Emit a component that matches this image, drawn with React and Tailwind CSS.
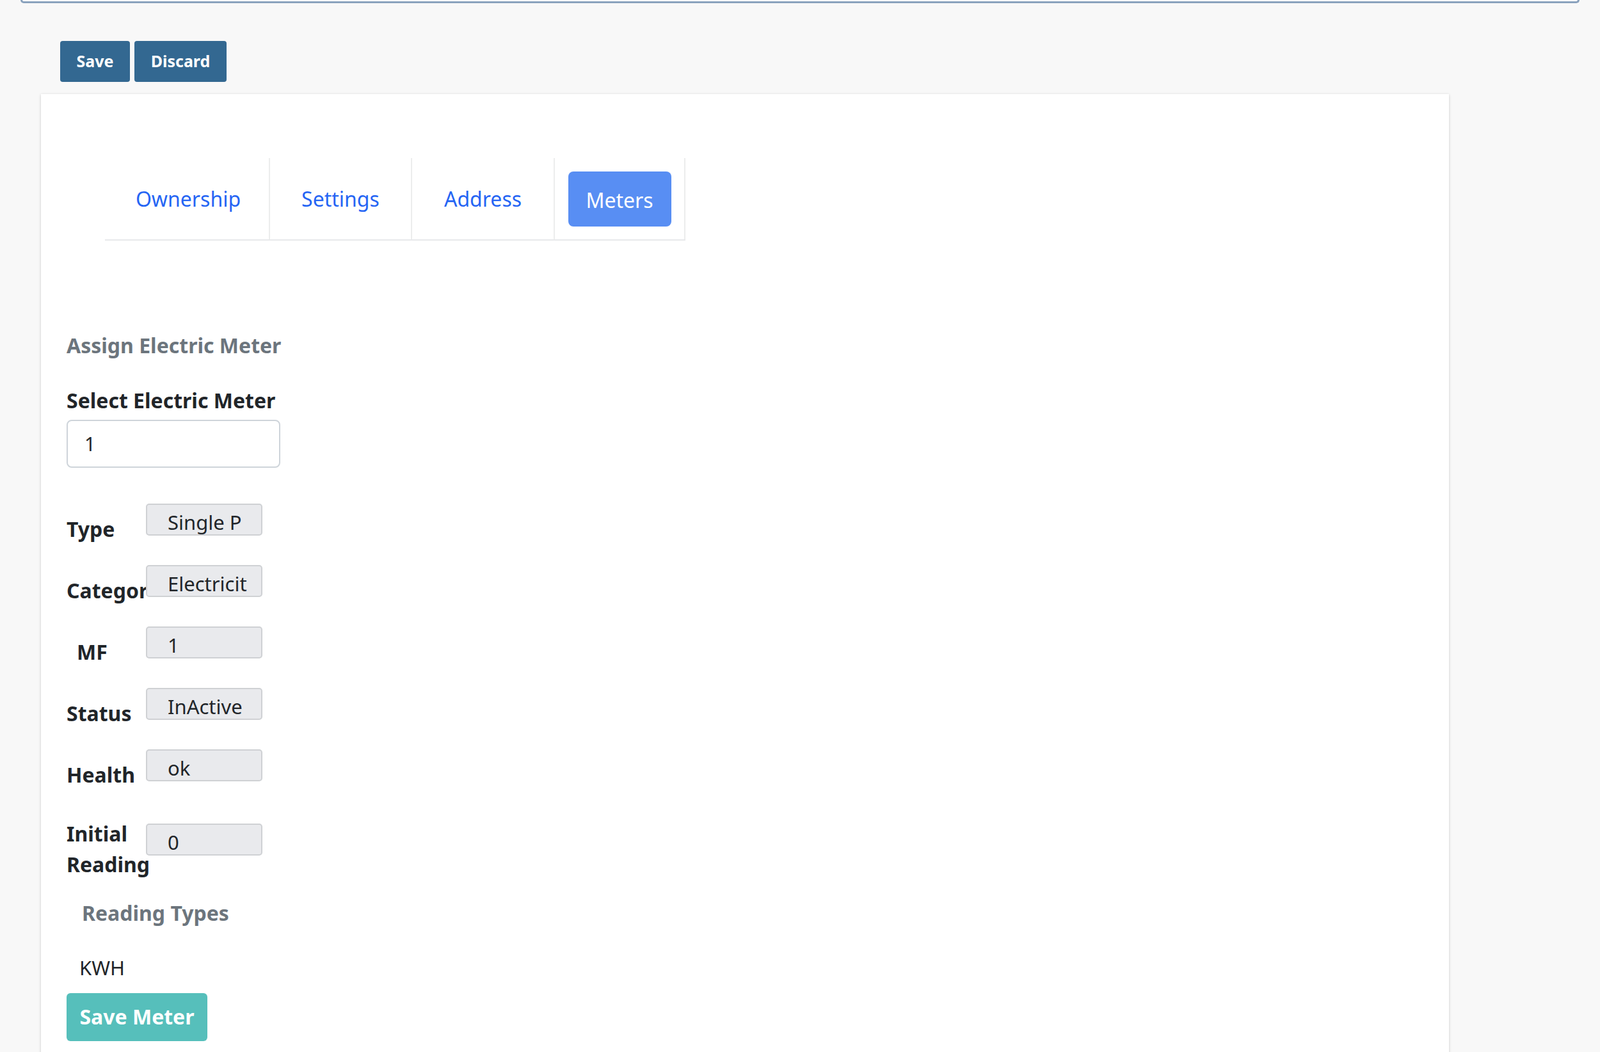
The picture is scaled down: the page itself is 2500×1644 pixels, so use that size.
import React from 'react';

const rows = [
  { label: 'Type', value: 'Single P' },
  { label: 'Category', value: 'Electricit' },
  { label: 'MF', value: '1', indent: true },
  { label: 'Status', value: 'InActive' },
  { label: 'Health', value: 'ok' },
];

function Field({ label, value, indent }) {
  return (
    <div className="flex h-[96px] items-start">
      <div className={`w-[124px] overflow-hidden whitespace-nowrap pt-[16px] text-[32px] font-bold text-[#212529] ${indent ? 'pl-[16px]' : ''}`}>
        {label}
      </div>
      <div className="h-[50px] w-[182px] overflow-hidden whitespace-nowrap rounded-[5px] border-2 border-[#cfd1d4] bg-[#e9eaed] pl-[32px] pt-[4px] text-[31px] text-[#212529]">
        {value}
      </div>
    </div>
  );
}

export default function App() {
  return (
    <div className="min-h-[1644px] bg-[#f8f8f8] font-['Liberation_Sans'] text-[#212529]">
      <div className="mx-[32px] h-[5px] rounded-b-[10px] border-b-[3px] border-x-[3px] border-[#8aa2bd] bg-white" />
      <div className="flex gap-[7px] pl-[94px] pt-[59px]">
        <button className="h-[64px] w-[109px] rounded-[4px] bg-[#336891] font-['Liberation_Sans'] text-[25px] font-bold text-white">Save</button>
        <button className="h-[64px] w-[144px] rounded-[4px] bg-[#336891] font-['Liberation_Sans'] text-[25px] font-bold text-white">Discard</button>
      </div>
      <div className="ml-[64px] mt-[19px] w-[2200px] bg-white pb-[40px] pl-[40px] shadow-[0_1px_4px_rgba(0,0,0,0.2)]">
        <div className="pt-[100px] pl-[60px]">
          <div className="flex h-[129px] w-[907px] border-b-2 border-[#e8e9eb] text-[32px] text-[#2565f4]">
            <div className="flex w-[258px] items-center justify-center border-r-2 border-[#eceded] pl-[4px]">Ownership</div>
            <div className="flex w-[222px] items-center justify-center border-r-2 border-[#eceded]">Settings</div>
            <div className="flex w-[223px] items-center justify-center border-r-2 border-[#eceded]">Address</div>
            <div className="flex w-[204px] items-center justify-center border-r-2 border-[#eceded]">
              <div className="flex h-[86px] w-[161px] items-center justify-center rounded-[8px] bg-[#588ef3] pt-[4px] text-white">Meters</div>
            </div>
          </div>
        </div>
        <div className="pt-[140px] text-[32px] font-bold text-[#6c757d]">Assign Electric Meter</div>
        <div className="mt-[38px] text-[32px] font-bold">Select Electric Meter</div>
        <div className="mt-[6px] flex h-[75px] w-[334px] items-center rounded-[8px] border-2 border-[#ced4da] pl-[26px] text-[30px]">1</div>
        <div className="mt-[56px] flex flex-col">
          {rows.map((r) => (
            <Field key={r.label} {...r} />
          ))}
          <div className="flex items-start pt-[12px]">
            <div className="w-[124px] text-[32px] font-bold leading-[48px]">
              Initial
              <br />
              Reading
            </div>
            <div className="mt-[8px] h-[50px] w-[182px] rounded-[5px] border-2 border-[#cfd1d4] bg-[#e9eaed] pl-[32px] pt-[4px] text-[31px]">0</div>
          </div>
        </div>
        <div className="mt-[28px] pl-[24px] text-[32px] font-bold text-[#6c757d]">Reading Types</div>
        <div className="mt-[38px] pl-[20px] text-[31px]">KWH</div>
        <button className="mt-[16px] h-[75px] w-[220px] rounded-[6px] bg-[#56bfbb] font-['Liberation_Sans'] text-[32px] font-bold text-white">Save Meter</button>
      </div>
    </div>
  );
}
